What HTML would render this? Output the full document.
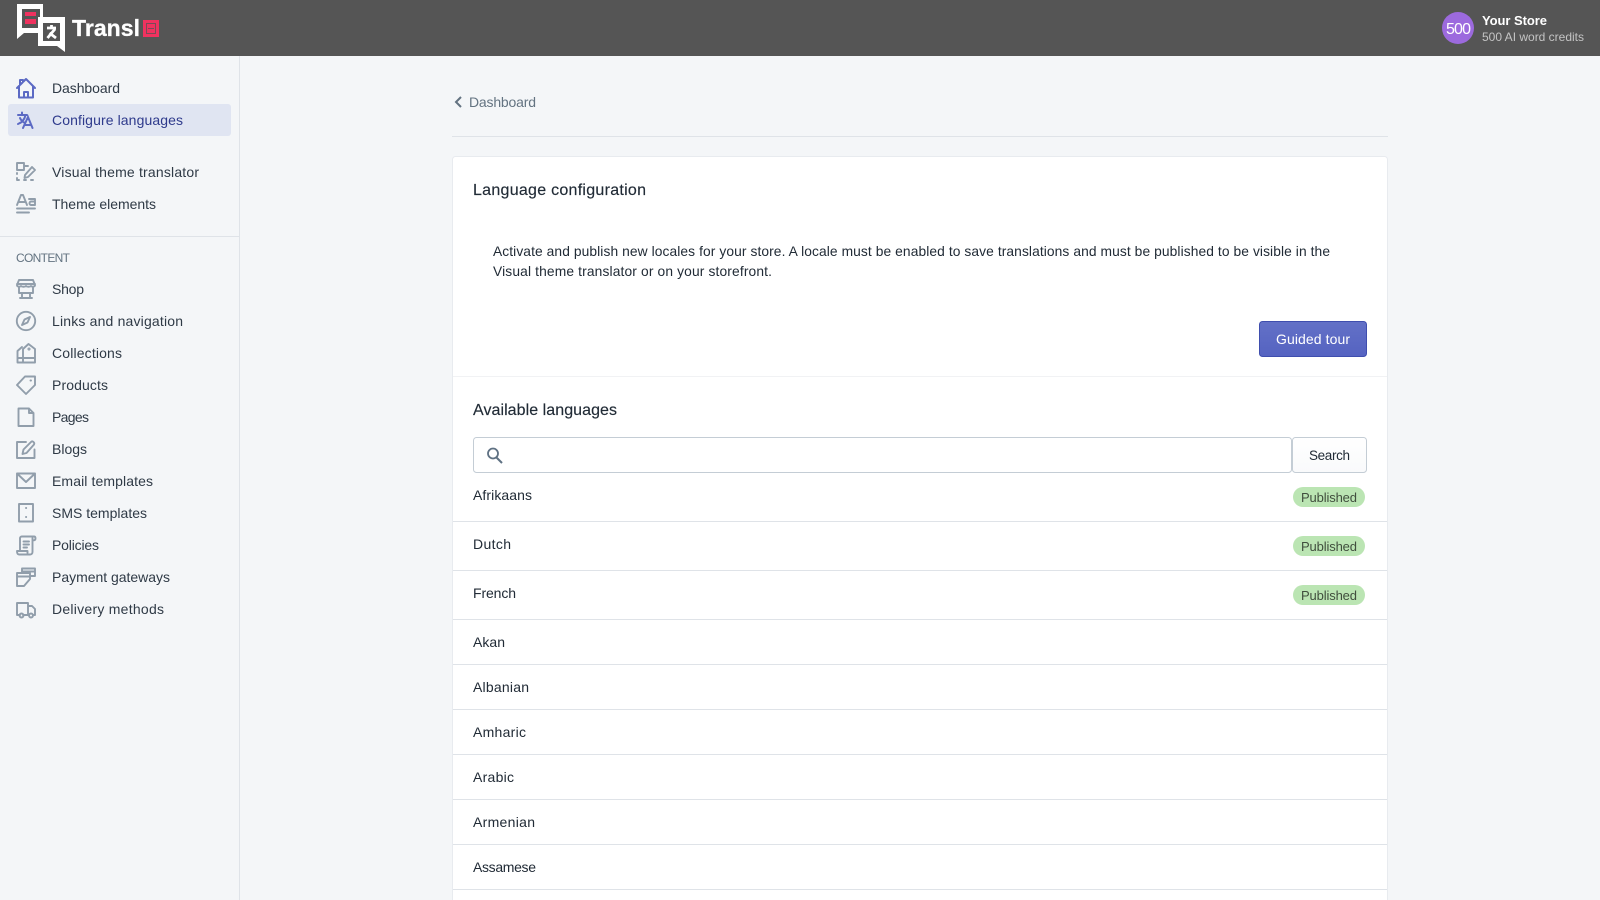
<!DOCTYPE html>
<html lang="en"><head><meta charset="utf-8"><title>Language configuration</title>
<style>
html,body{margin:0;padding:0;width:1600px;height:900px;overflow:hidden;background:#f4f6f8}
svg{display:block}
text{font-family:"Liberation Sans",Arial,sans-serif;font-size:14px;fill:#212b36}
.n{fill:#2f3a46}
.ic{fill:none;stroke:#919eab;stroke-width:1.9;stroke-linejoin:round;stroke-linecap:round}
.r{font-size:14px}
</style></head><body>
<svg width="1600" height="900" viewBox="0 0 1600 900" xmlns="http://www.w3.org/2000/svg">
<rect width="1600" height="900" fill="#f4f6f8"/>
<!-- header -->
<rect width="1600" height="56" fill="#555555"/>
<path d="M17 4H43V17H38V33H24L17 39Z" fill="#fff"/>
<rect x="22" y="9" width="18" height="19" fill="#555"/>
<rect x="25" y="12" width="11" height="4" fill="#f0325f"/><rect x="25" y="19" width="11" height="5" fill="#f0325f"/>
<path d="M38 17H65V52L57 46H38Z" fill="#fff"/>
<rect x="43" y="23" width="17" height="18" fill="#555"/>
<path d="M47 28H56M51.500 25V29M55 29L47.500 38M49.500 33L56 38" stroke="#fff" stroke-width="2.800" fill="none"/>
<text x="72" y="36" textLength="68" style="font-size:23px;font-weight:700;fill:#fff;stroke:#fff;stroke-width:.3">Transl</text>
<rect x="143" y="20" width="16" height="17" fill="#f0325f"/>
<rect x="146.500" y="23.500" width="9" height="10" fill="none" stroke="#7a4a57" stroke-width="1"/>
<rect x="148" y="28" width="6" height="1" fill="#7a4a57"/>
<circle cx="1458" cy="28" r="16" fill="#9c6ade"/>
<text x="1446" y="34" textLength="25" style="font-size:16px;fill:#fff">500</text>
<text x="1482" y="25" textLength="65" style="font-size:13px;font-weight:700;fill:#fff">Your Store</text>
<text x="1482" y="41" textLength="102" style="font-size:12px;fill:#c4c4c4">500 AI word credits</text>
<!-- sidebar -->
<rect x="239" y="56" width="1" height="844" fill="#dfe3e8"/>
<rect x="8" y="104" width="223" height="32" rx="3" fill="#e0e5f2"/>
<rect x="0" y="236" width="239" height="1" fill="#dfe3e8"/>
<g class="ic" transform="translate(16,78)" style="stroke:#5c6ac4;stroke-width:2"><path d="M1 10L10 1L19 10M3 8V19.500H17V8M8 19.500V14H12V19.500M4 7V2H7V4"/></g>
<g transform="translate(17,112)" style="fill:none;stroke:#5c6ac4;stroke-width:2;stroke-linecap:round"><path d="M1 3H10M5 0.500V3M8.500 3C7.500 8 5 10.500 1 12M3 6C4 8.500 6 10 8 11M6 16L11 5L15.500 16M7.500 13H14"/></g>
<g class="ic" transform="translate(16,162)"><path d="M1 1H8V8H1ZM8 4H12M1 11V12M1 16V18H3M8 18H10M15 18H17M9 13L16 5L19 8L12 15L8.500 16Z"/></g>
<g class="ic" transform="translate(16,194)"><path d="M1 11L5 1H7L11 11M3 8H9M13 5H19V11H15C13 11 13 7.500 15 7.500H19M1 14.500H19M1 18.500H13"/></g>
<g class="ic" transform="translate(16,279)"><path d="M3 1H17L19 6C19 8 16 8 15 7C14 8 11 8 10 7C9 8 6 8 5 7C4 8 1 8 1 6ZM3 8V14H17V8M1 5H19M6 14V19M14 14V19M4 19H16"/></g>
<g class="ic" transform="translate(16,311)"><circle cx="10" cy="10" r="9.200"/><path d="M14 6L11.500 11.500L6 14L8.500 8.500Z"/></g>
<g class="ic" transform="translate(16,343)"><path d="M1.500 19.500V8L6 4M7 19.500V6L12.500 1L19 6V19.500ZM1.500 19.500H7M1.500 15H19"/><circle cx="13" cy="6" r="0.600"/></g>
<g class="ic" transform="translate(16,375)"><path d="M1 10L10 19L19 10V1.500H9ZM14.500 5.500H15"/></g>
<g class="ic" transform="translate(16,407)"><path d="M2.500 1.500H13L17.500 6V19H2.500ZM13 1.500V6H17.500"/></g>
<g class="ic" transform="translate(16,439.500)"><path d="M10 2.500H1V18.500H18.500V10M6.500 14.500L7.500 10L15 2.500C16.500 1 19 3 18 5L10.500 13.500Z"/></g>
<g class="ic" transform="translate(16,470.500)"><path d="M1 3H19V17.500H1ZM1 3L10 11.500L19 3"/></g>
<g class="ic" transform="translate(16,502)"><path d="M3 2H17V19.500H3ZM10 6H10.200M10 15H10.200"/></g>
<g class="ic" transform="translate(16,535)"><path d="M4 15V3C4 2 5 1.500 6 1.500H18C19 1.500 19.500 2 19.500 3.500C19.500 5 18 5.500 16.500 5.500M16.500 3V17C16.500 19 15 19.500 14 19.500H3C1.500 19.500 1 18 1 16H11.500V18M7.500 6.500H13M7.500 9.500H13M7.500 12.500H11"/></g>
<g class="ic" transform="translate(16,567)"><path d="M6 6V1.500H19V9H14M6 4.500H19M1 6H14V12L8 19H1ZM1 9.500H14"/></g>
<g class="ic" transform="translate(16,601)"><path d="M4 14H1V2H12V14H7M12 5H16L19 8V14H18M12 14H13"/><circle cx="5.500" cy="14.500" r="2"/><circle cx="15" cy="14.500" r="2"/></g>
<text class="n" x="52" y="93" textLength="68">Dashboard</text>
<text x="52" y="125" textLength="131" style="fill:#2e3a8c">Configure languages</text>
<text class="n" x="52" y="177" textLength="147">Visual theme translator</text>
<text class="n" x="52" y="209" textLength="104">Theme elements</text>
<text x="16" y="262" textLength="54" style="font-size:12px;fill:#637381">CONTENT</text>
<text class="n" x="52" y="294" textLength="32">Shop</text>
<text class="n" x="52" y="326" textLength="131">Links and navigation</text>
<text class="n" x="52" y="358" textLength="70">Collections</text>
<text class="n" x="52" y="390" textLength="56">Products</text>
<text class="n" x="52" y="422" textLength="37">Pages</text>
<text class="n" x="52" y="454" textLength="35">Blogs</text>
<text class="n" x="52" y="486" textLength="101">Email templates</text>
<text class="n" x="52" y="518" textLength="95">SMS templates</text>
<text class="n" x="52" y="550" textLength="47">Policies</text>
<text class="n" x="52" y="582" textLength="118">Payment gateways</text>
<text class="n" x="52" y="614" textLength="112">Delivery methods</text>
<!-- breadcrumb -->
<path d="M461 97L456 102L461 107" fill="none" stroke="#637381" stroke-width="2"/>
<text x="469" y="107" textLength="67" style="fill:#637381">Dashboard</text>
<rect x="452" y="136" width="936" height="1" fill="#dfe3e8"/>
<!-- card -->
<rect x="452.500" y="156.500" width="935" height="760" rx="3" fill="#fff" stroke="#e8ebef"/>
<rect x="453" y="376" width="934" height="1" fill="#f1f2f4"/>
<text x="473" y="195" textLength="173" style="font-size:16px;stroke:#212b36;stroke-width:.15">Language configuration</text>
<text x="493" y="256" textLength="837" style="font-size:13.800px">Activate and publish new locales for your store. A locale must be enabled to save translations and must be published to be visible in the</text>
<text x="493" y="276" textLength="279" style="font-size:13.800px">Visual theme translator or on your storefront.</text>
<defs><linearGradient id="g" x1="0" y1="0" x2="0" y2="1"><stop offset="0" stop-color="#6371c7"/><stop offset="1" stop-color="#5563c1"/></linearGradient>
<linearGradient id="w" x1="0" y1="0" x2="0" y2="1"><stop offset="0" stop-color="#fff"/><stop offset="1" stop-color="#f9fafb"/></linearGradient></defs>
<rect x="1259.500" y="321.500" width="107" height="35" rx="3" fill="url(#g)" stroke="#3f4eae"/>
<text x="1276" y="344" textLength="74" style="fill:#fff">Guided tour</text>
<text x="473" y="415" textLength="144" style="font-size:16px;stroke:#212b36;stroke-width:.15">Available languages</text>
<rect x="473.500" y="437.500" width="818" height="35" rx="3" fill="#fff" stroke="#c4cdd5"/>
<rect x="1292.500" y="437.500" width="74" height="35" rx="3" fill="url(#w)" stroke="#c4cdd5"/>
<text x="1309" y="460" textLength="41" style="font-size:13.500px">Search</text>
<circle cx="493" cy="453.500" r="5" fill="none" stroke="#5f7183" stroke-width="1.800"/>
<path d="M496.500 457.500L502 463" stroke="#5f7183" stroke-width="2"/>
<!-- rows -->
<g fill="#dfe3e8"><rect x="453" y="521" width="934" height="1"/><rect x="453" y="570" width="934" height="1"/><rect x="453" y="619" width="934" height="1"/><rect x="453" y="664" width="934" height="1"/><rect x="453" y="709" width="934" height="1"/><rect x="453" y="754" width="934" height="1"/><rect x="453" y="799" width="934" height="1"/><rect x="453" y="844" width="934" height="1"/><rect x="453" y="889" width="934" height="1"/></g>
<text class="r" x="473" y="500" textLength="59">Afrikaans</text>
<text class="r" x="473" y="549" textLength="38">Dutch</text>
<text class="r" x="473" y="598" textLength="43">French</text>
<text class="r" x="473" y="647" textLength="32">Akan</text>
<text class="r" x="473" y="692" textLength="56">Albanian</text>
<text class="r" x="473" y="737" textLength="53">Amharic</text>
<text class="r" x="473" y="782" textLength="41">Arabic</text>
<text class="r" x="473" y="827" textLength="62">Armenian</text>
<text class="r" x="473" y="872" textLength="63">Assamese</text>
<g fill="#bbe5b3"><rect x="1293" y="487" width="72" height="20" rx="10"/><rect x="1293" y="536" width="72" height="20" rx="10"/><rect x="1293" y="585" width="72" height="20" rx="10"/></g>
<text x="1301" y="502" textLength="56" style="font-size:13px;fill:#414f3e">Published</text>
<text x="1301" y="551" textLength="56" style="font-size:13px;fill:#414f3e">Published</text>
<text x="1301" y="600" textLength="56" style="font-size:13px;fill:#414f3e">Published</text>
</svg>
</body></html>
